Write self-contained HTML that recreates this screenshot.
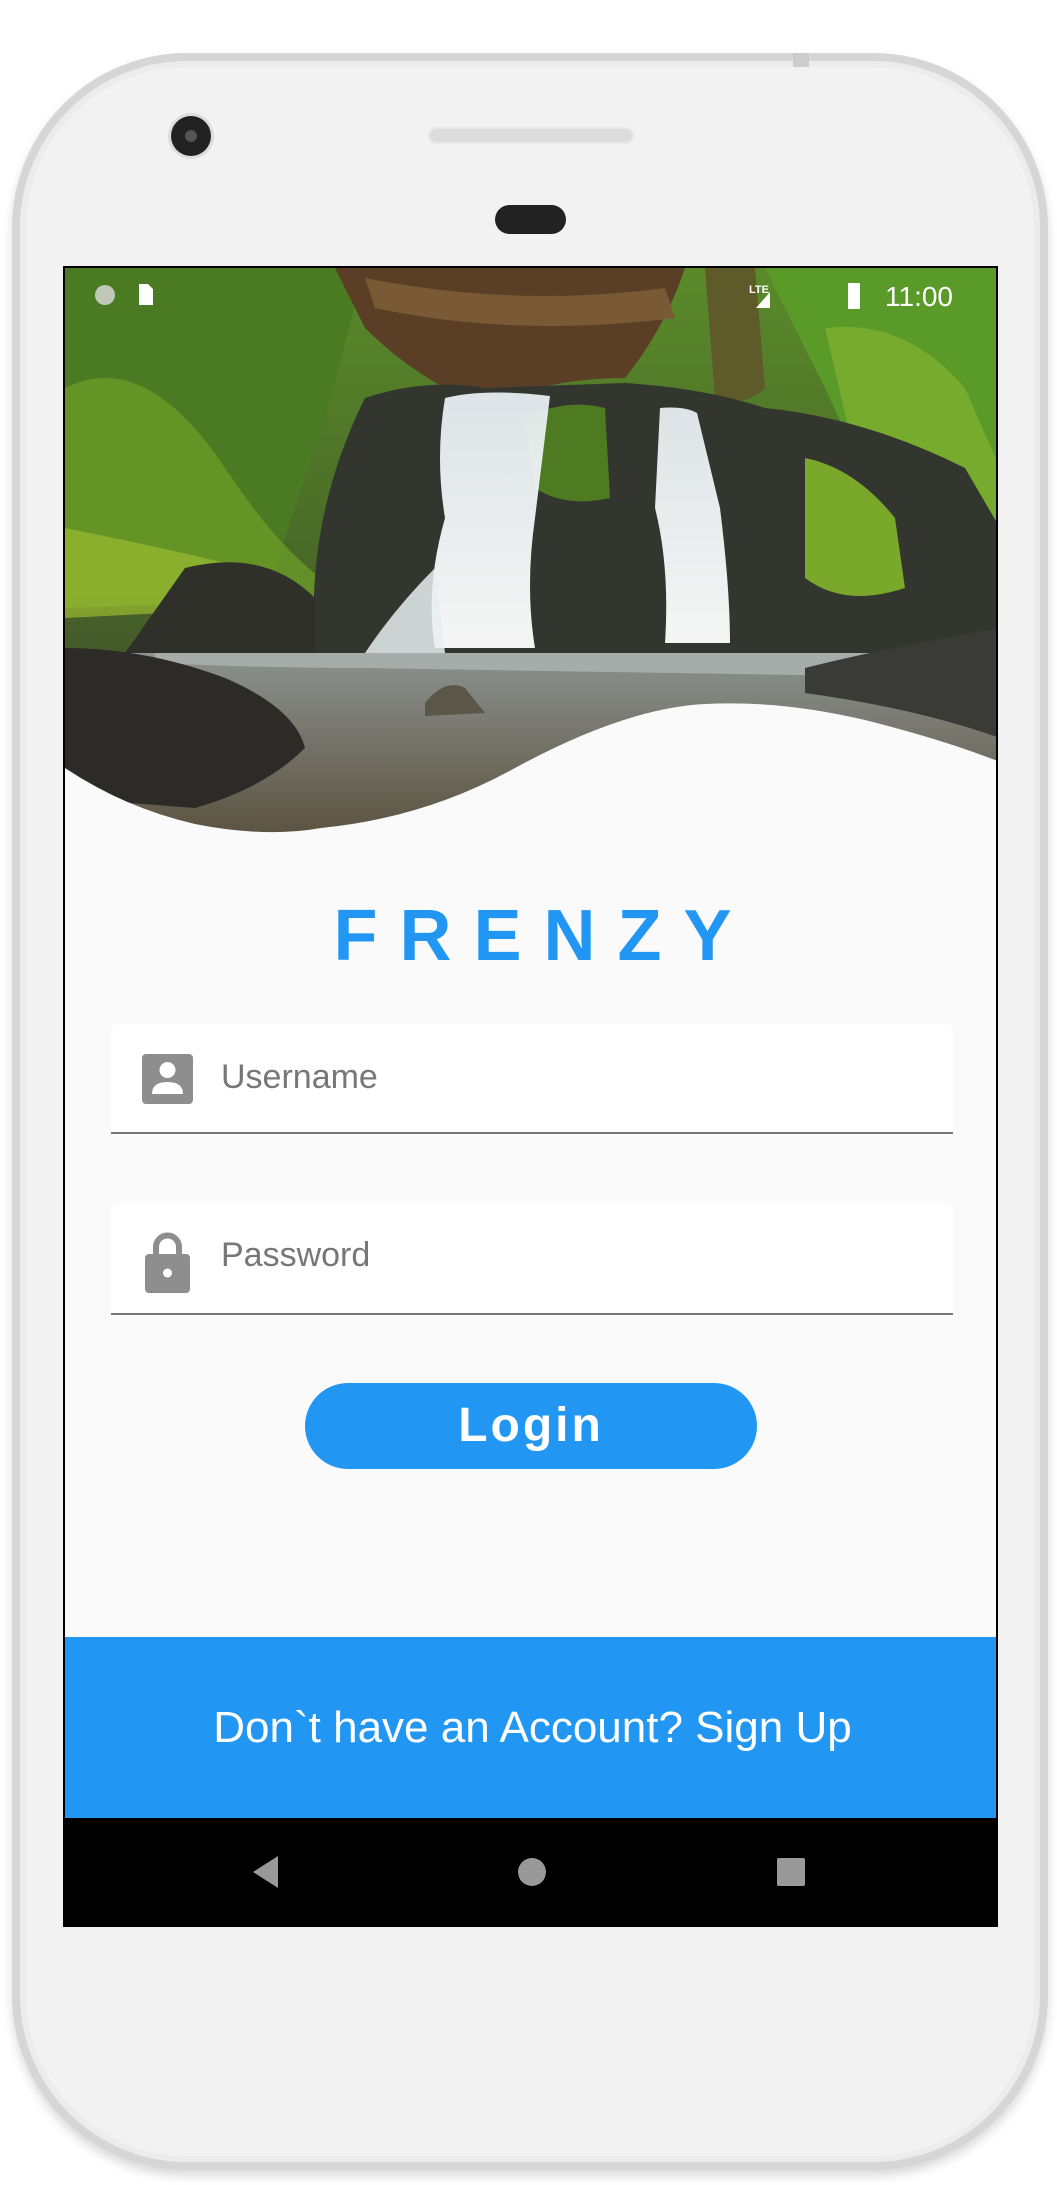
<!DOCTYPE html>
<html><head><meta charset="utf-8"><style>
*{margin:0;padding:0;box-sizing:border-box}
body{width:1057px;height:2185px;background:#fff;position:relative;overflow:hidden;font-family:"Liberation Sans",sans-serif}
.phone{position:absolute;left:12px;top:53px;width:1036px;height:2117px;border-radius:175px;background:#f2f2f2;border:8px solid #d6d6d6;box-shadow:inset 0 0 0 6px #ececec,0 6px 10px rgba(0,0,0,.15)}
.screen{position:absolute;left:63px;top:266px;width:935px;height:1661px;background:#fafafa;border:2px solid #000;overflow:hidden}
.abs{position:absolute}
</style></head><body>
<div class="phone"></div>
<div class="abs" style="left:171px;top:116px;width:40px;height:40px;border-radius:50%;background:#222;box-shadow:0 0 0 3px #ddd"><div class="abs" style="left:14px;top:14px;width:12px;height:12px;border-radius:50%;background:#555"></div></div>
<div class="abs" style="left:428px;top:127px;width:206px;height:17px;border-radius:9px;background:#dcdcdc;border:2px solid #e8e8e8"></div>
<div class="abs" style="left:495px;top:205px;width:71px;height:29px;border-radius:15px;background:#222"></div>
<div class="abs" style="left:793px;top:53px;width:16px;height:14px;background:#ccc"></div>
<div class="screen">
<svg class="abs" style="left:0;top:0" width="935" height="570" viewBox="0 0 935 570">
<defs>
<linearGradient id="bg" x1="0" y1="0" x2="0" y2="1"><stop offset="0" stop-color="#5a8a2a"/><stop offset=".5" stop-color="#4a6a28"/><stop offset="1" stop-color="#3a3c2e"/></linearGradient>
<linearGradient id="wf" x1="0" y1="0" x2="0" y2="1"><stop offset="0" stop-color="#e6edf0"/><stop offset="1" stop-color="#ffffff"/></linearGradient>
<linearGradient id="pool" x1="0" y1="0" x2="0" y2="1"><stop offset="0" stop-color="#8c9290"/><stop offset="1" stop-color="#5b5240"/></linearGradient>
</defs>
<rect width="935" height="570" fill="url(#bg)"/>
<path d="M0 0H300L260 150L200 330L0 330Z" fill="#4a7a22"/>
<path d="M0 120Q80 80 160 200T300 330L0 340Z" fill="#6a9a28" opacity=".8"/>
<path d="M0 260Q100 280 180 300L200 340L0 350Z" fill="#9abb30" opacity=".7"/>
<path d="M700 0H935V300L820 250L760 120Z" fill="#5a9a28"/>
<path d="M760 60Q840 50 900 120L935 200V300L800 230Z" fill="#8ab830" opacity=".6"/>
<path d="M270 0H620Q600 60 560 110Q480 110 420 140Q350 110 300 60Z" fill="#5a3f26"/>
<path d="M300 10Q450 40 600 20L610 50Q450 70 310 40Z" fill="#7a5a34"/>
<path d="M640 0H690L700 120Q680 140 650 130Z" fill="#5e5a2a"/>
<path d="M300 130Q360 110 420 120L560 115Q640 120 700 140Q800 150 900 200L935 260V385H250Q240 250 300 130Z" fill="#33352f"/>
<path d="M460 150Q500 130 540 140L545 230Q500 240 470 220Z" fill="#4e7a22"/>
<path d="M740 190Q790 200 830 250L840 320Q780 340 740 310Z" fill="#7aa82a"/>
<path d="M120 300Q200 280 250 330L250 385H60Z" fill="#2f302a"/>
<path d="M380 130Q420 120 485 128L470 250Q460 320 470 380H370Q360 320 380 250Q370 190 380 130Z" fill="url(#wf)" opacity=".95"/>
<path d="M370 300Q330 340 300 385H380Z" fill="#e8eef0" opacity=".85"/>
<path d="M595 140Q620 138 632 145L655 240Q665 320 665 375H600Q605 300 590 240Z" fill="url(#wf)" opacity=".95"/>
<path d="M0 385H935V570H0Z" fill="url(#pool)"/>
<path d="M90 385H935V410Q600 405 300 400Q200 400 90 395Z" fill="#a6acaa"/>
<path d="M0 380Q80 380 160 410Q230 440 240 480Q200 520 130 540L0 530Z" fill="#2d2b27"/>
<path d="M740 400Q820 380 935 360V470Q850 440 740 425Z" fill="#3a3a36"/>
<path d="M360 435Q380 410 400 420L420 445L360 448Z" fill="#5a5648"/>
<path d="M0 500Q60 540 130 556Q200 570 256 560Q360 550 450 500Q560 440 640 436Q715 432 800 452Q880 472 935 494V570H0Z" fill="#fafafa"/>
<g fill="#fff"><circle cx="40" cy="27" r="10" fill="#ddd" opacity=".8"/><path d="M74 16h9l5 5v16h-14z"/><path d="M691 40L705 24V40Z"/><text x="684" y="25" font-size="11" font-family="Liberation Sans" fill="#fff" font-weight="bold">LTE</text><rect x="783" y="15" width="12" height="26" rx="1"/><text x="820" y="38" font-size="28" font-family="Liberation Sans" fill="#fff">11:00</text></g>
</svg>
<div class="abs" style="left:0;top:628px;width:935px;text-align:center;color:#2196f3;font-weight:bold;font-size:72px;letter-spacing:22px;padding-left:22px;line-height:80px">FRENZY</div>
<div class="abs" style="left:46px;top:756px;width:842px;height:110px;background:#fff;border-radius:6px 6px 0 0;border-bottom:2px solid #777"></div>
<svg class="abs" style="left:77px;top:786px" width="51" height="50"><rect width="51" height="50" rx="4" fill="#8e8e8e"/><circle cx="25.5" cy="16" r="8" fill="#fff"/><path d="M10 40Q10 28 25.5 28Q41 28 41 40Z" fill="#fff"/></svg>
<div class="abs" style="left:156px;top:790px;font-size:34px;color:#777">Username</div>
<div class="abs" style="left:46px;top:935px;width:842px;height:112px;background:#fff;border-radius:6px 6px 0 0;border-bottom:2px solid #777"></div>
<svg class="abs" style="left:77px;top:962px" width="51" height="64"><path d="M14 24V17a11.5 11.5 0 0 1 23 0v7" stroke="#8e8e8e" stroke-width="6" fill="none"/><rect x="3" y="24" width="45" height="39" rx="4" fill="#8e8e8e"/><circle cx="25.5" cy="43" r="4.5" fill="#fff"/></svg>
<div class="abs" style="left:156px;top:968px;font-size:34px;color:#777">Password</div>
<div class="abs" style="left:240px;top:1115px;width:452px;height:86px;border-radius:43px;background:#2196f3;color:#fff;font-size:48px;font-weight:bold;text-align:center;line-height:86px;letter-spacing:3px">Login</div>
<div class="abs" style="left:0;top:1369px;width:935px;height:181px;background:#2196f3;color:#fff;font-size:44px;text-align:center;line-height:181px">Don`t have an Account? Sign Up</div>
<div class="abs" style="left:0;top:1550px;width:935px;height:111px;background:#000"></div>
<svg class="abs" style="left:0;top:1550px" width="935" height="111"><path d="M213 38L213 70L188 54Z" fill="#999"/><circle cx="467" cy="54" r="14" fill="#999"/><rect x="712" y="40" width="28" height="28" rx="2" fill="#999"/></svg>
</div>
</body></html>
